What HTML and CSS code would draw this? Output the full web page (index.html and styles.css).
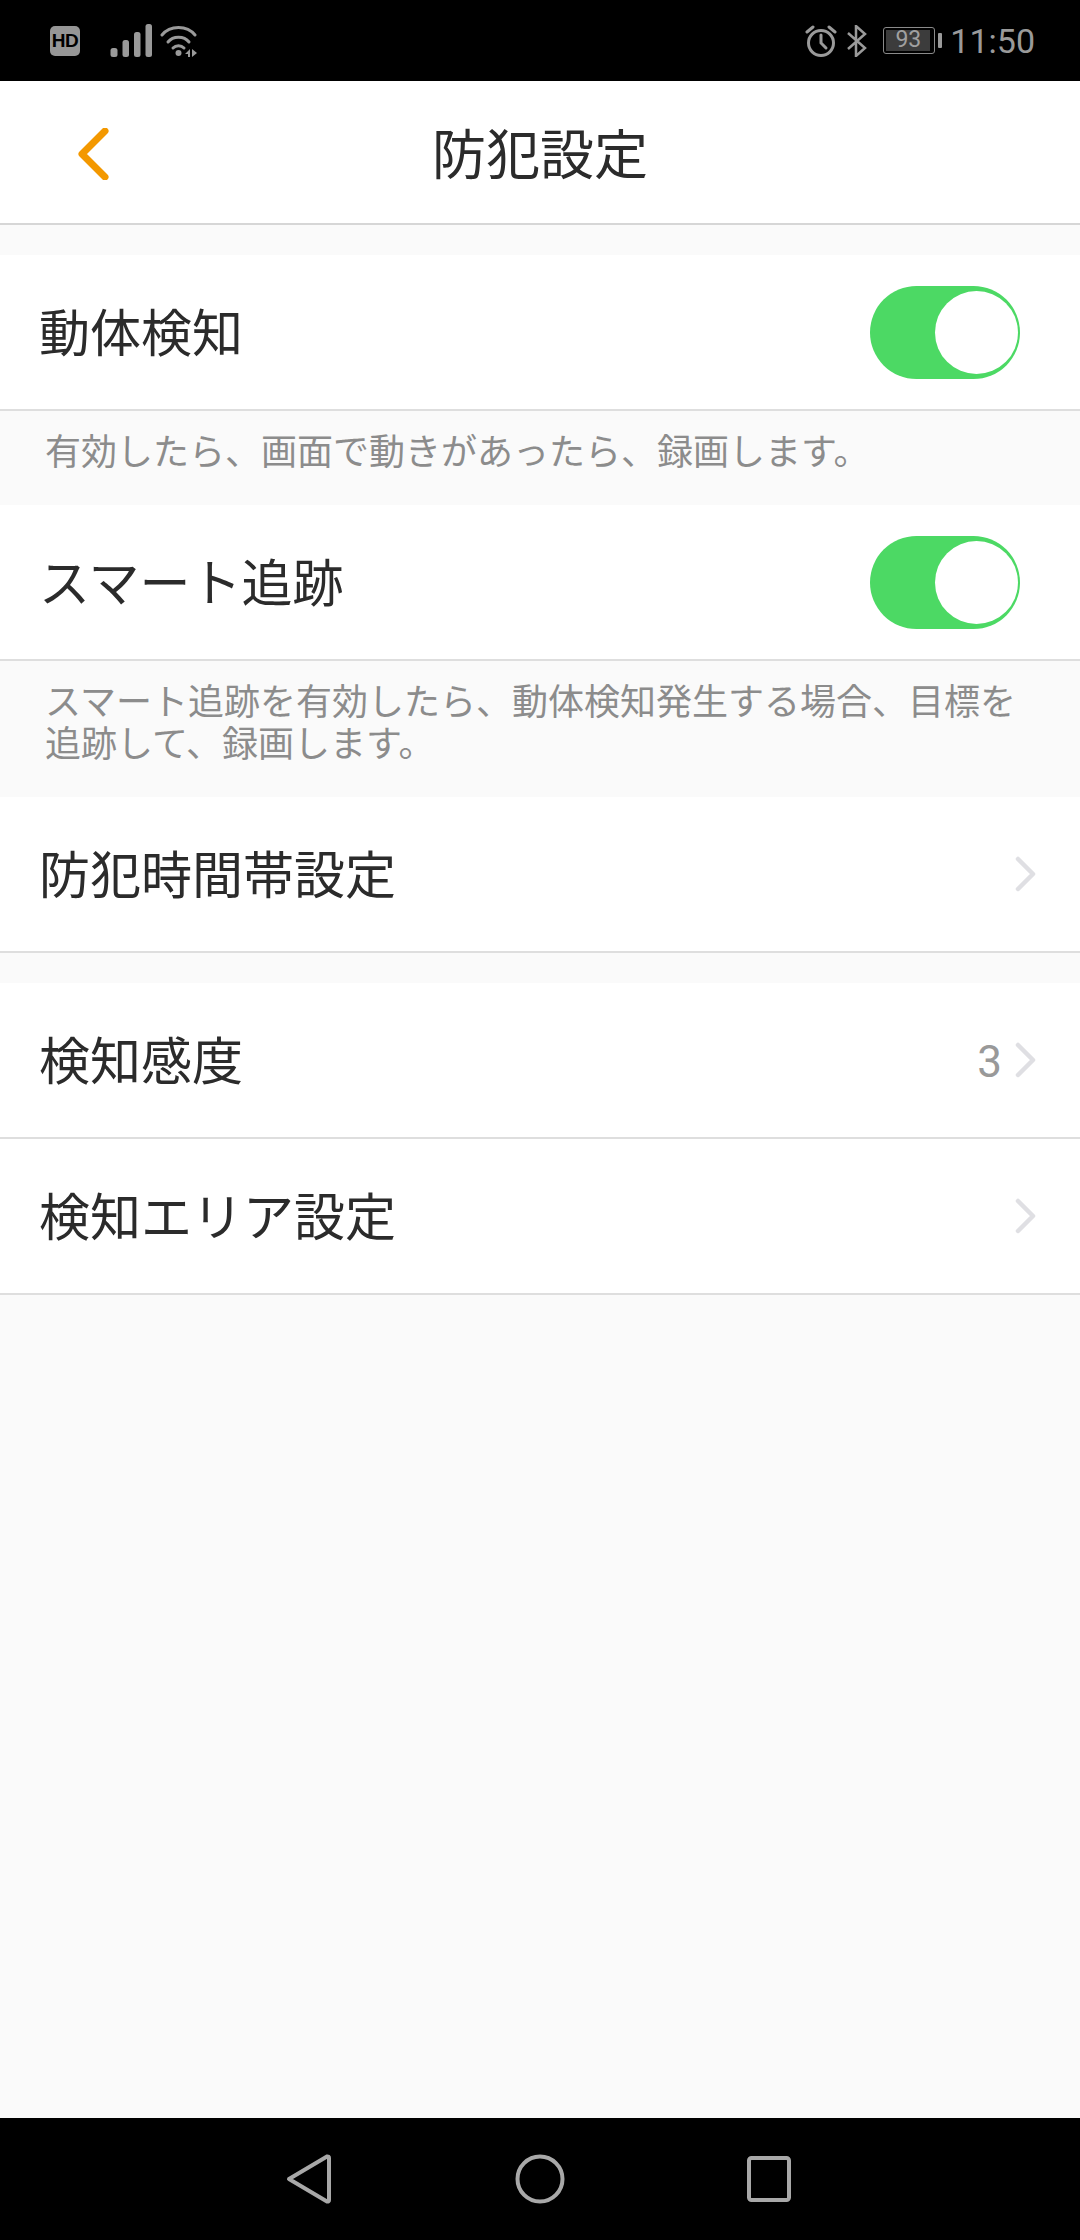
FILE: index.html
```html
<!DOCTYPE html>
<html lang="ja">
<head>
<meta charset="utf-8">
<title>防犯設定</title>
<link rel="stylesheet" href="styles.css">
</head>
<body>
<div class="screen">
  <header class="status">
    <div class="status-left">
      <div class="hd">HD</div>
      <svg class="signal" width="42" height="36" viewBox="0 0 42 36"><g fill="#9a9a9a"><rect x="0.500" y="25" width="7" height="9" rx="2.500"/><rect x="12.500" y="17" width="6.500" height="17" rx="2.500"/><rect x="24" y="9" width="6.500" height="25" rx="2.500"/><rect x="35.500" y="1" width="6.500" height="33" rx="2.500"/></g></svg>
      <svg class="wifi" width="40" height="32" viewBox="0 0 40 32"><g fill="none" stroke="#9a9a9a" stroke-width="3" stroke-linecap="round"><path d="M2 10C10 0 27 0 35 10"/><path d="M8 17C13 10.500 24 10.500 29 17"/><path d="M13 23C16 20 21 20 24 23"/></g><circle cx="18.500" cy="28" r="3" fill="#9a9a9a"/><path d="M25 29l5-5v8h-2v-3zM32 24l5 4-5 4z" fill="#9a9a9a"/></svg>
    </div>
    <div class="status-right">
      <svg class="alarm" width="32" height="32" viewBox="0 0 32 32"><g fill="none" stroke="#9a9a9a" stroke-width="3" stroke-linecap="round"><circle cx="16" cy="18" r="12.500"/><path d="M16 10v8l5 5"/><path d="M2 7l6-5M30 7l-6-5"/></g></svg>
      <svg class="bt" width="22" height="32" viewBox="0 0 22 32"><path d="M2 8l17 15-9 8V1l9 8L2 24" fill="none" stroke="#9a9a9a" stroke-width="2.500"/></svg>
      <div class="battery"><div class="battery-level">93</div></div>
      <div class="battery-tip"></div>
      <div class="time">11:50</div>
    </div>
  </header>

  <nav class="navbar">
    <svg class="back" width="32" height="52" viewBox="0 0 32 52"><path d="M27 3L4 26l23 23" fill="none" stroke="#f39800" stroke-width="7" stroke-linecap="round" stroke-linejoin="round"/></svg>
    <h1 class="title">防犯設定</h1>
  </nav>

  <main class="content">
    <div class="spacer"></div>
    <div class="row"><span class="label">動体検知</span><div class="toggle"><div class="knob"></div></div></div>
    <p class="note note-one">有効したら、画面で動きがあったら、録画します。</p>
    <div class="row"><span class="label">スマート追跡</span><div class="toggle"><div class="knob"></div></div></div>
    <p class="note note-two">スマート追跡を有効したら、動体検知発生する場合、目標を追跡して、録画します。</p>
    <div class="row"><span class="label">防犯時間帯設定</span><svg class="chev" width="22" height="36" viewBox="0 0 22 36"><path d="M3 3l15 15L3 33" fill="none" stroke="#dfdfe3" stroke-width="4.500" stroke-linecap="round" stroke-linejoin="round"/></svg></div>
    <div class="spacer"></div>
    <div class="row"><span class="label">検知感度</span><span class="value">3</span><svg class="chev" width="22" height="36" viewBox="0 0 22 36"><path d="M3 3l15 15L3 33" fill="none" stroke="#dfdfe3" stroke-width="4.500" stroke-linecap="round" stroke-linejoin="round"/></svg></div>
    <div class="row"><span class="label">検知エリア設定</span><svg class="chev" width="22" height="36" viewBox="0 0 22 36"><path d="M3 3l15 15L3 33" fill="none" stroke="#dfdfe3" stroke-width="4.500" stroke-linecap="round" stroke-linejoin="round"/></svg></div>
  </main>

  <footer class="sysnav">
    <svg width="46" height="52" viewBox="0 0 46 52"><path d="M3 26L41 3.500a1.500 1.500 0 0 1 2 1.500v42a1.500 1.500 0 0 1-2 1.500z" fill="none" stroke="#a8a8a8" stroke-width="4" stroke-linejoin="round"/></svg>
    <svg width="50" height="50" viewBox="0 0 50 50"><circle cx="25" cy="25" r="22.500" fill="none" stroke="#a8a8a8" stroke-width="4"/></svg>
    <svg width="44" height="46" viewBox="0 0 44 46"><rect x="2" y="2" width="40" height="42" rx="2.500" fill="none" stroke="#a8a8a8" stroke-width="4"/></svg>
  </footer>
</div>
</body>
</html>
```
FILE: styles.css
```css
* { box-sizing: border-box; }
html, body { margin: 0; padding: 0; }
body { width: 1080px; height: 2240px; overflow: hidden; font-family: "Noto Sans CJK JP", "Noto Sans", sans-serif; }
.screen { width: 1080px; height: 2240px; display: flex; flex-direction: column; background: #fafafa; }

.status { height: 81px; flex: none; background: #000; display: flex; justify-content: space-between; align-items: center; padding: 0 45px 0 50px; }
.status-left, .status-right { display: flex; align-items: center; }
.hd { width: 30px; height: 30px; border-radius: 5px; background: #969696; color: #000; font: 700 19px/30px "Liberation Sans", sans-serif; text-align: center; letter-spacing: -0.5px; }
.signal { margin-left: 30px; }
.wifi { margin-left: 8px; }
.alarm { margin-right: 9px; }
.bt { margin-right: 15px; }
.battery { width: 52px; height: 27px; border: 1.500px solid #8a8a8a; border-radius: 3px; padding: 2px; }
.battery-level { height: 100%; width: 44px; background: #3c3c3c; color: #a0a0a0; font: 400 23px/20px Roboto, sans-serif; text-align: center; }
.battery-tip { width: 4px; height: 15px; margin-left: 3px; border-radius: 1px; background: #9a9a9a; margin-right: 8px; }
.time { color: #9a9a9a; font: 400 34px/40px Roboto, sans-serif; }

.navbar { height: 144px; flex: none; background: #fff; border-bottom: 2px solid #d6d6d6; display: flex; align-items: center; justify-content: center; position: relative; }
.back { position: absolute; left: 78px; top: 47px; }
.title { margin: 0; font-weight: 400; font-size: 54px; line-height: 72px; color: #2b2b2b; }

.content { flex: 1; display: flex; flex-direction: column; }
.spacer { height: 30px; }
.row { height: 156px; background: #fff; border-bottom: 2px solid #dedede; display: flex; align-items: center; padding: 0 43px 0 39px; }
.label { font-size: 51px; line-height: 70px; color: #2b2b2b; flex: 1; position: relative; top: -2px; }
.value { font: 400 44px/50px Roboto, sans-serif; color: #999; margin-right: 13px; padding-top: 4px; }
.chev { display: block; }
.toggle { width: 150px; height: 93px; border-radius: 47px; background: #4cd964; margin-right: 17px; padding: 5px 2px 5px 65px; }
.knob { width: 83px; height: 83px; border-radius: 50%; background: #fff; }
.note { margin: 0; padding: 0 40px 0 45px; font-size: 36px; line-height: 42px; color: #8c8c8c; }
.note-one { height: 94px; padding-top: 17px; }
.note-two { height: 136px; padding-top: 17px; }

.sysnav { height: 122px; flex: none; background: #000; display: flex; align-items: center; justify-content: flex-start; padding-left: 286px; }
.sysnav svg:nth-child(2) { margin-left: 183px; }
.sysnav svg:nth-child(3) { margin-left: 182px; }
```
